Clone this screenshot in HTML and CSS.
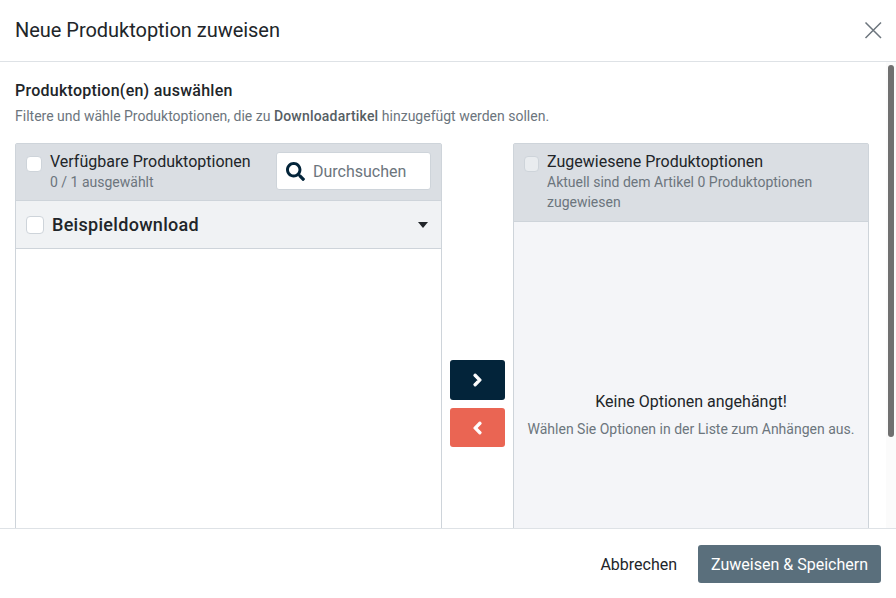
FILE: index.html
```html
<!DOCTYPE html>
<html lang="de">
<head>
    <meta charset="UTF-8">
    <meta name="viewport" content="width=device-width, initial-scale=1.0">
    <title>Neue Produktoption zuweisen</title>
    <link rel="stylesheet" href="styles.css">
</head>
<body>
    <div class="modal">
        <header class="modal-header">
            <h1>Neue Produktoption zuweisen</h1>
            <button class="close" type="button" aria-label="Schließen">
                <svg width="18" height="18" viewBox="0 0 18 18"><path d="M1.500 1.500l15.500 15.500M17 1.500L1.500 17" fill="none" stroke="#6c757d" stroke-width="1.500"/></svg>
            </button>
        </header>
        <main class="modal-body">
            <h2>Produktoption(en) auswählen</h2>
            <p class="intro">Filtere und wähle Produktoptionen, die zu <strong>Downloadartikel</strong> hinzugefügt werden sollen.</p>
            <div class="columns">
                <section class="panel">
                    <div class="panel-head available">
                        <input class="check" type="checkbox">
                        <div class="head-text">
                            <div class="head-title">Verfügbare Produktoptionen</div>
                            <div class="head-sub">0 / 1 ausgewählt</div>
                        </div>
                        <label class="search">
                            <svg width="19" height="19" viewBox="0 0 512 512"><path fill="#03243a" d="M505 442.700L405.300 343c-4.500-4.500-10.600-7-17-7H372c27.600-35.300 44-79.700 44-128C416 93.100 322.900 0 208 0S0 93.100 0 208s93.100 208 208 208c48.300 0 92.700-16.400 128-44v16.300c0 6.400 2.500 12.500 7 17l99.700 99.700c9.400 9.400 24.600 9.400 33.900 0l28.300-28.300c9.400-9.400 9.400-24.600.1-34zM208 336c-70.700 0-128-57.200-128-128 0-70.700 57.200-128 128-128 70.700 0 128 57.200 128 128 0 70.700-57.200 128-128 128z"/></svg>
                            <input type="text" placeholder="Durchsuchen">
                        </label>
                    </div>
                    <div class="group-row">
                        <input class="check large" type="checkbox">
                        <span class="group-name">Beispieldownload</span>
                        <span class="caret"></span>
                    </div>
                </section>
                <div class="transfer">
                    <button class="move add" type="button" aria-label="Hinzufügen">
                        <svg class="chevron" width="9" height="14" viewBox="0 0 320 512"><path d="M285.476 272.971L91.132 467.314c-9.373 9.373-24.569 9.373-33.941 0l-22.667-22.667c-9.357-9.357-9.375-24.522-.04-33.901L188.505 256 34.484 101.255c-9.335-9.379-9.317-24.544.04-33.901l22.667-22.667c9.373-9.373 24.569-9.373 33.941 0L285.475 239.030c9.373 9.372 9.373 24.568.001 33.941z"/></svg>
                    </button>
                    <button class="move remove" type="button" aria-label="Entfernen">
                        <svg class="chevron" width="9" height="14" viewBox="0 0 320 512"><path d="M34.520 239.030L228.870 44.690c9.370-9.370 24.570-9.370 33.940 0l22.670 22.670c9.360 9.360 9.370 24.520.04 33.900L131.490 256l154.020 154.750c9.340 9.380 9.320 24.540-.04 33.900l-22.670 22.670c-9.370 9.370-24.570 9.370-33.940 0L34.520 272.970c-9.370-9.370-9.370-24.570 0-33.940z"/></svg>
                    </button>
                </div>
                <section class="panel assigned">
                    <div class="panel-head">
                        <input class="check" type="checkbox" disabled>
                        <div class="head-text">
                            <div class="head-title">Zugewiesene Produktoptionen</div>
                            <div class="head-sub">Aktuell sind dem Artikel 0 Produktoptionen zugewiesen</div>
                        </div>
                    </div>
                    <div class="empty">
                        <div class="empty-title">Keine Optionen angehängt!</div>
                        <div class="empty-sub">Wählen Sie Optionen in der Liste zum Anhängen aus.</div>
                    </div>
                </section>
            </div>
            <div class="scrollbar"><div class="thumb"></div></div>
        </main>
        <footer class="modal-footer">
            <button class="cancel" type="button">Abbrechen</button>
            <button class="save" type="button">Zuweisen &amp; Speichern</button>
        </footer>
    </div>
</body>
</html>
```
FILE: styles.css
```css
* {
    box-sizing: border-box;
}
html, body {
    height: 100%;
    margin: 0;
    overflow: hidden;
}
body {
    font-family: Roboto, "Liberation Sans", sans-serif;
    color: #212529;
    background: #ffffff;
}
button {
    font-family: inherit;
}
.modal {
    display: flex;
    flex-direction: column;
    height: 598px;
}
.modal-header {
    display: flex;
    align-items: center;
    justify-content: space-between;
    height: 62px;
    padding: 0 14px 1px 15px;
    border-bottom: 1px solid #dee2e6;
    flex-shrink: 0;
}
.modal-header h1 {
    margin: 0;
    font-size: 20px;
    font-weight: 400;
    letter-spacing: -0.03px;
}
.close {
    display: flex;
    padding: 0;
    border: none;
    background: none;
}
.modal-body {
    position: relative;
    flex: 1;
    min-height: 0;
    overflow: hidden;
    padding: 19px 27px 0 15px;
}
.modal-body h2 {
    margin: 0;
    font-size: 16px;
    line-height: 19px;
    font-weight: 500;
    letter-spacing: 0.25px;
}
.intro {
    margin: 6px 0 0;
    font-size: 14px;
    line-height: 20px;
    color: #6c757d;
}
.intro strong {
    font-weight: 500;
    letter-spacing: 0.2px;
    color: #565e64;
}
.columns {
    display: grid;
    grid-template-columns: 427px 71px 356px;
    height: 521px;
    margin-top: 17px;
}
.panel {
    display: flex;
    flex-direction: column;
    border: 1px solid #ced4da;
    border-radius: 2px;
}
.panel-head {
    display: flex;
    align-items: flex-start;
    padding: 8px 10px 9px;
    background: #dadee3;
    border-bottom: 1px solid #ced4da;
}
.panel-head.available {
    height: 57px;
}
.check {
    appearance: none;
    width: 16px;
    height: 16px;
    margin: 4px 8px 0 0;
    flex-shrink: 0;
    background: #ffffff;
    border: 1px solid #ced4da;
    border-radius: 4px;
}
.check:disabled {
    width: 15px;
    background: #e9ecef;
}
.check.large {
    width: 18px;
    height: 18px;
    margin: 0 8px 0 0;
}
.head-text {
    flex: 1;
    min-width: 0;
}
.head-title {
    font-size: 16px;
    line-height: 20px;
}
.head-sub {
    font-size: 14px;
    line-height: 20px;
    color: #6c757d;
}
.search {
    display: flex;
    align-items: center;
    width: 155px;
    height: 38px;
    padding-left: 9px;
    background: #ffffff;
    border: 1px solid #ced4da;
    border-radius: 3px;
}
.search input {
    width: 110px;
    margin-left: 8px;
    padding: 0;
    border: none;
    outline: none;
    font-family: inherit;
    font-size: 16px;
}
.search input::placeholder {
    color: #6c757d;
    opacity: 1;
}
.group-row {
    display: flex;
    align-items: center;
    height: 48px;
    padding: 0 13px 0 10px;
    background: #f0f2f4;
    border-bottom: 1px solid #ced4da;
}
.group-name {
    flex: 1;
    font-size: 18px;
    font-weight: 500;
    letter-spacing: 0.3px;
}
.caret {
    width: 0;
    height: 0;
    border-left: 5.500px solid transparent;
    border-right: 5.500px solid transparent;
    border-top: 6px solid #212529;
}
.transfer {
    display: flex;
    flex-direction: column;
    align-items: center;
    justify-content: center;
    gap: 8px;
}
.move {
    display: flex;
    align-items: center;
    justify-content: center;
    width: 55px;
    height: 40px;
    padding: 0;
    border: none;
    border-radius: 3px;
}
.move.add {
    background: #03243a;
}
.move.remove {
    height: 39px;
    background: #ea6553;
}
.chevron {
    fill: #ffffff;
    stroke: #ffffff;
    stroke-width: 40;
    overflow: visible;
}
.assigned {
    background: #f4f5f8;
}
.empty {
    padding-top: 170px;
    text-align: center;
}
.empty-title {
    font-size: 16px;
    line-height: 20px;
}
.empty-sub {
    margin-top: 7px;
    font-size: 14px;
    line-height: 20px;
    color: #6c757d;
}
.scrollbar {
    position: absolute;
    top: 0;
    right: 0;
    bottom: 0;
    width: 10px;
    background: #fbfbfb;
}
.thumb {
    width: 6px;
    height: 372px;
    margin: 3px 0 0 2px;
    background: #707070;
    border-radius: 3px;
}
.modal-footer {
    display: flex;
    align-items: center;
    justify-content: flex-end;
    height: 70px;
    padding: 0 15px;
    background: #ffffff;
    border-top: 1px solid #dee2e6;
    flex-shrink: 0;
}
.cancel {
    margin-right: 8px;
    padding: 1px 13px 0;
    height: 38px;
    border: none;
    background: none;
    color: #212529;
    font-size: 16px;
}
.save {
    height: 38px;
    padding: 1px 13px 0;
    border: none;
    border-radius: 3px;
    background: #5a6f7c;
    color: #ffffff;
    font-size: 16px;
}
```
